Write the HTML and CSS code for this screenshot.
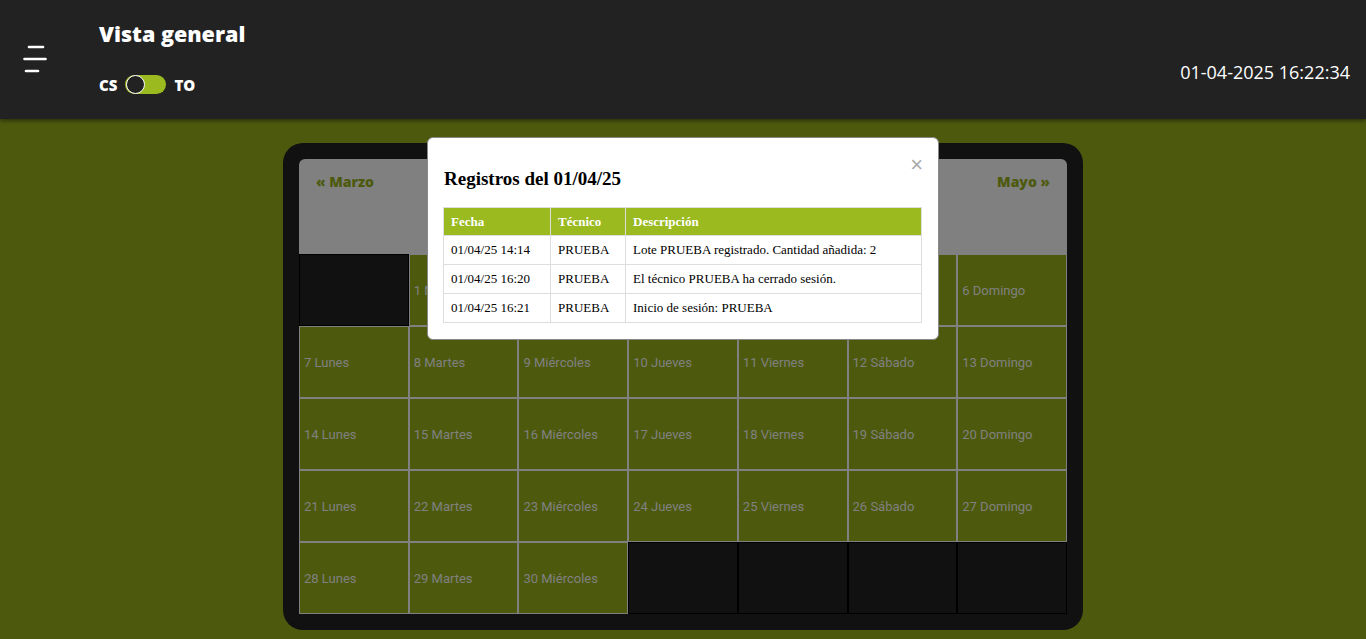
FILE: index.html
```html
<!DOCTYPE html>
<html lang="es">
<head>
<meta charset="utf-8">
<title>Vista general</title>
<link rel="stylesheet" href="styles.css">
</head>
<body>
<header class="topbar">
  <div class="menu-btn">
    <svg width="24" height="30" viewBox="0 0 24 30">
      <line x1="6" y1="3" x2="20" y2="3" stroke="#fff" stroke-width="2.6" stroke-linecap="round"/>
      <line x1="1.5" y1="15" x2="22.5" y2="15" stroke="#fff" stroke-width="2.6" stroke-linecap="round"/>
      <line x1="3" y1="27" x2="15" y2="27" stroke="#fff" stroke-width="2.6" stroke-linecap="round"/>
    </svg>
  </div>
  <div class="title-block">
    <h1 class="title">Vista general</h1>
    <div class="switch-row">
      <span class="sw-label">CS</span>
      <span class="switch"><span class="knob"></span></span>
      <span class="sw-label">TO</span>
    </div>
  </div>
  <div class="clock">01-04-2025 16:22:34</div>
</header>

<main class="main">
  <section class="calendar">
    <div class="cal-head">
      <a class="nav">« Marzo</a>
      <a class="nav">Mayo »</a>
    </div>
    <div class="grid">
      <div class="day empty"></div>
      <div class="day">1 Martes</div>
      <div class="day">2 Miércoles</div>
      <div class="day">3 Jueves</div>
      <div class="day">4 Viernes</div>
      <div class="day">5 Sábado</div>
      <div class="day">6 Domingo</div>
      <div class="day">7 Lunes</div>
      <div class="day">8 Martes</div>
      <div class="day">9 Miércoles</div>
      <div class="day">10 Jueves</div>
      <div class="day">11 Viernes</div>
      <div class="day">12 Sábado</div>
      <div class="day">13 Domingo</div>
      <div class="day">14 Lunes</div>
      <div class="day">15 Martes</div>
      <div class="day">16 Miércoles</div>
      <div class="day">17 Jueves</div>
      <div class="day">18 Viernes</div>
      <div class="day">19 Sábado</div>
      <div class="day">20 Domingo</div>
      <div class="day">21 Lunes</div>
      <div class="day">22 Martes</div>
      <div class="day">23 Miércoles</div>
      <div class="day">24 Jueves</div>
      <div class="day">25 Viernes</div>
      <div class="day">26 Sábado</div>
      <div class="day">27 Domingo</div>
      <div class="day">28 Lunes</div>
      <div class="day">29 Martes</div>
      <div class="day">30 Miércoles</div>
      <div class="day empty"></div>
      <div class="day empty"></div>
      <div class="day empty"></div>
      <div class="day empty"></div>
    </div>
  </section>
</main>

<div class="modal">
  <span class="close">×</span>
  <h2 class="modal-title">Registros del 01/04/25</h2>
  <table class="log">
    <thead>
      <tr><th class="c1">Fecha</th><th class="c2">Técnico</th><th>Descripción</th></tr>
    </thead>
    <tbody>
      <tr><td>01/04/25 14:14</td><td>PRUEBA</td><td>Lote PRUEBA registrado. Cantidad añadida: 2</td></tr>
      <tr><td>01/04/25 16:20</td><td>PRUEBA</td><td>El técnico PRUEBA ha cerrado sesión.</td></tr>
      <tr><td>01/04/25 16:21</td><td>PRUEBA</td><td>Inicio de sesión: PRUEBA</td></tr>
    </tbody>
  </table>
</div>
</body>
</html>
```

FILE: styles.css
```css
* { box-sizing: border-box; }
html, body { margin: 0; padding: 0; }
body {
  background: #4d5a0e;
  font-family: "Open Sans", "Liberation Sans", sans-serif;
  height: 639px;
  overflow: hidden;
  position: relative;
}
.topbar {
  height: 119px;
  background: #222222;
  display: flex;
  align-items: flex-start;
  box-shadow: 0 2px 4px rgba(0,0,0,0.45);
  position: relative;
  z-index: 2;
}
.menu-btn {
  padding: 44px 0 0 23px;
  width: 99px;
}
.menu-btn svg { display: block; }
.title-block { padding-top: 19px; }
.title {
  margin: 0;
  color: #fff;
  font-size: 21.5px;
  font-weight: 800;
  line-height: 30px;
  letter-spacing: 0;
}
.switch-row {
  display: flex;
  align-items: center;
  margin-top: 26px;
  gap: 8px;
}
.sw-label {
  color: #fff;
  font-weight: 800;
  font-size: 15px;
  line-height: 16px;
}
.switch {
  width: 41px;
  height: 19px;
  border-radius: 10px;
  background: #9aba1f;
  position: relative;
  display: inline-block;
}
.knob {
  position: absolute;
  left: 1px;
  top: 0;
  width: 19px;
  height: 19px;
  border-radius: 50%;
  background: #222;
  border: 1.5px solid #fff;
}
.clock {
  margin-left: auto;
  margin-right: 16px;
  margin-top: 60px;
  color: #fff;
  font-size: 18px;
  line-height: 24px;
}
.main {
  display: flex;
  justify-content: center;
  padding-top: 24px;
}
.calendar {
  width: 800px;
  background: #111111;
  border-radius: 20px;
  padding: 16px;
}
.cal-head {
  height: 95px;
  background: #808080;
  border-radius: 6px 6px 0 0;
  display: flex;
  justify-content: space-between;
  align-items: flex-start;
  padding: 14px 17px;
}
.nav {
  color: #4d5a0e;
  font-weight: 800;
  font-size: 14px;
  line-height: 18px;
}
.grid {
  display: grid;
  grid-template-columns: repeat(7, 1fr);
  grid-auto-rows: 72px;
}
.day {
  border: 1px solid #808080;
  background: #4d5a0e;
  color: #808080;
  font-family: Roboto, "Liberation Sans", sans-serif;
  font-size: 13px;
  display: flex;
  align-items: center;
  padding: 0 4px;
}
.day.empty {
  background: #111111;
  border-color: #000;
}
.modal {
  position: absolute;
  left: 427px;
  top: 137px;
  width: 512px;
  height: 203px;
  background: #fff;
  border: 1px solid #888;
  border-radius: 6px;
  padding: 16px 16px 0 16px;
  font-family: "Liberation Serif", serif;
  z-index: 5;
}
.close {
  position: absolute;
  right: 15px;
  top: 16px;
  color: #aaa;
  font-family: "Liberation Sans", sans-serif;
  font-size: 22px;
  line-height: 22px;
}
.modal-title {
  margin: 13px 0 16px 0;
  font-size: 19px;
  font-weight: 700;
  line-height: 24px;
}
.log {
  width: 479px;
  border-collapse: collapse;
  font-size: 13px;
  margin-left: -1px;
}
.log th, .log td {
  border: 1px solid #ddd;
  text-align: left;
  padding: 0 7px;
  height: 29px;
}
.log th {
  background: #9aba1f;
  color: #fff;
  font-weight: 700;
  height: 28px;
}
.log .c1 { width: 107px; }
.log .c2 { width: 75px; }
```
